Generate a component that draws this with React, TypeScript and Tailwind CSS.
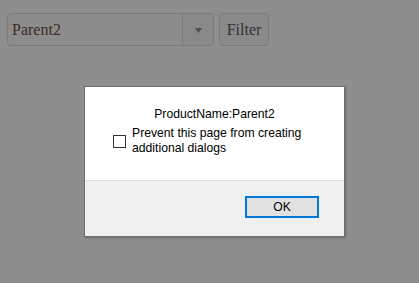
export default function App() {
  return (
    <div className="relative w-[419px] h-[283px] overflow-hidden bg-[#8e8e8e]">
      {/* page under the overlay */}
      <div className="flex items-start gap-[5px] pl-[7px] pt-[13px] font-['Liberation_Serif',serif] text-[16px]">
        <div className="flex w-[207px] h-[33px] rounded-[4px] border border-[#7b7b7b] bg-[#8c8c8c]">
          <div className="flex-1 flex items-center pl-[4px] text-[#3f2a22]">Parent2</div>
          <div className="w-[31px] flex items-center justify-center border-l border-[#7b7b7b] bg-[#898989] rounded-r-[4px]">
            <svg width="7" height="5" viewBox="0 0 7 5" className="mt-[1px]">
              <path d="M0 0H7L3.5 5Z" fill="#4e4e4e" />
            </svg>
          </div>
        </div>
        <button className="w-[50px] h-[33px] rounded-[4px] border border-[#7b7b7b] bg-[#8a8a8a] text-[#333]">
          Filter
        </button>
      </div>

      {/* alert dialog */}
      <div className="absolute left-[84px] top-[86px] w-[261px] h-[151px] flex flex-col border border-[#6f6f6f] bg-white font-['Liberation_Sans',Arial,sans-serif] text-[12.2px] text-black shadow-[1px_1px_2px_rgba(0,0,0,0.25)]">
        <div className="h-[93px] flex flex-col pt-[20px]">
          <div className="text-center leading-[15px]">ProductName:Parent2</div>
          <label className="mt-[4px] flex items-center pl-[28px] gap-[6px]">
            <span className="w-[13px] h-[13px] border border-[#333] bg-white shrink-0" />
            <span className="leading-[15px]">
              Prevent this page from creating
              <br />
              additional dialogs
            </span>
          </label>
        </div>
        <div className="flex-1 flex justify-end items-start pt-[15px] pr-[25px] bg-[#f0f0f0] border-t border-[#dfdfdf]">
          <button className="w-[74px] h-[22px] border-2 border-[#0078d7] bg-[#e1e1e1] text-[12.2px] leading-none">
            OK
          </button>
        </div>
      </div>
    </div>
  );
}
